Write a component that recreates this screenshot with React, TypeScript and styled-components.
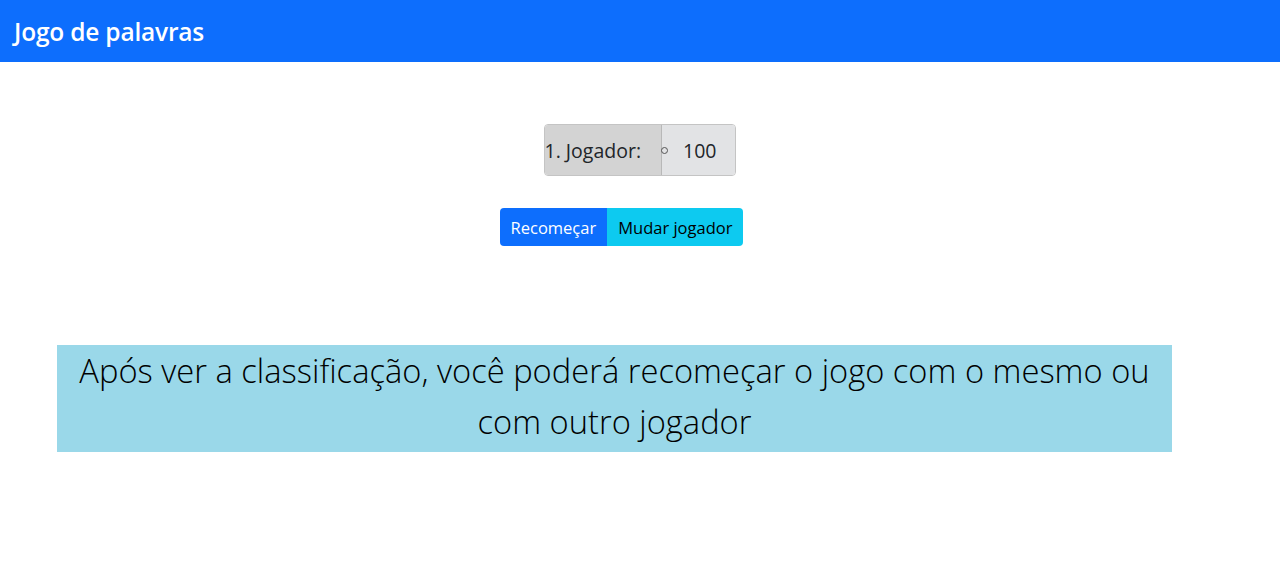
import React from "react";
import styled, { createGlobalStyle } from "styled-components";

const GlobalStyle = createGlobalStyle`
	html, body {
		margin: 0;
		padding: 0;
		background: #ffffff;
		font-family: "Open Sans", "Noto Sans", sans-serif;
		color: #212529;
	}
`;

const Navbar = styled.nav`
	height: 62px;
	background: #0d6efd;
	display: flex;
	align-items: center;
	padding: 0 14px;
`;

const Brand = styled.span`
	color: #ffffff;
	font-size: 24.5px;
	font-weight: 600;
	letter-spacing: -0.2px;
`;

const Main = styled.main`
	display: flex;
	flex-direction: column;
	align-items: center;
	padding-top: 62px;
`;

const InputGroup = styled.div`
	display: flex;
	box-sizing: border-box;
	height: 52px;
	border: 1px solid #c4c4c4;
	border-radius: 4px;
	overflow: hidden;
	font-size: 19.5px;
	color: #212529;
`;

const Label = styled.div`
	display: flex;
	align-items: center;
	background: #d3d3d3;
	padding: 0 20px 0 0;
	border-right: 1px solid #b8b8b8;
`;

const Score = styled.div`
	display: flex;
	align-items: center;
	gap: 15px;
	background: #e2e3e5;
	padding: 0 19px 0 0;
`;

const Bullet = styled.span`
	width: 5px;
	height: 5px;
	border: 1px solid #555;
	border-radius: 50%;
	margin-left: -1px;
`;

const ButtonGroup = styled.div`
	display: flex;
	margin: 32px 37px 0 0;
	border-radius: 4px;
	overflow: hidden;
`;

const Button = styled.button<{ $variant: "primary" | "info" }>`
	height: 38px;
	border: none;
	padding: 0 11px;
	font-family: inherit;
	font-size: 16.5px;
	background: ${(p) => (p.$variant === "primary" ? "#0d6efd" : "#0dcaf0")};
	color: ${(p) => (p.$variant === "primary" ? "#ffffff" : "#000000")};
	cursor: pointer;
`;

const InfoBox = styled.div`
	align-self: flex-start;
	margin: 99px 0 0 57px;
	width: 1115px;
	height: 107px;
	background: #9ad8e9;
	color: #000000;
	font-size: 32.7px;
	font-weight: 300;
	line-height: 51px;
	text-align: center;
	box-sizing: border-box;
	padding: 0 20px;
`;

export default function App() {
	return (
		<React.Fragment>
			<GlobalStyle />
			<Navbar>
				<Brand>Jogo de palavras</Brand>
			</Navbar>
			<Main>
				<InputGroup>
					<Label>1. Jogador:</Label>
					<Score>
						<Bullet />
						100
					</Score>
				</InputGroup>
				<ButtonGroup>
					<Button $variant="primary">Recomeçar</Button>
					<Button $variant="info">Mudar jogador</Button>
				</ButtonGroup>
				<InfoBox>
					Após ver a classificação, você poderá recomeçar o jogo com o mesmo ou com outro jogador
				</InfoBox>
			</Main>
		</React.Fragment>
	);
}
